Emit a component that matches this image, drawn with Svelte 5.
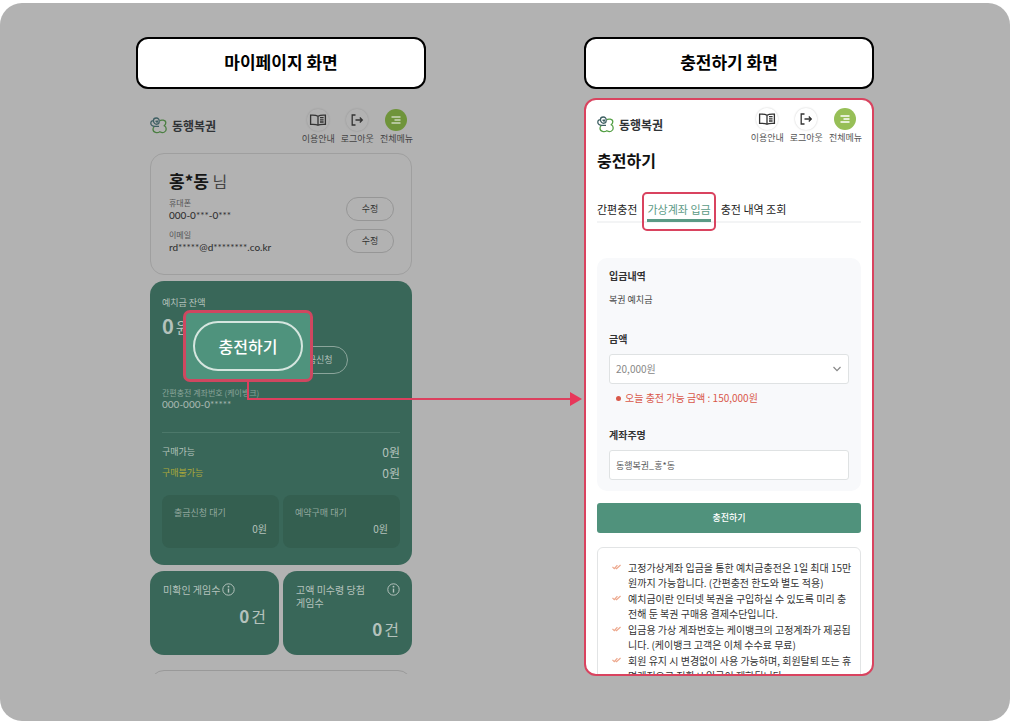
<script lang="ts">
  const menu = [
    { label: '이용안내', icon: 'book' },
    { label: '로그아웃', icon: 'logout' },
    { label: '전체메뉴', icon: 'menu' }
  ];

  const contacts = [
    { label: '휴대폰', value: '000-0***-0***' },
    { label: '이메일', value: 'rd*****@d********.co.kr' }
  ];

  const waiting = ['출금신청 대기', '예약구매 대기'];
  const tabs = ['간편충전', '가상계좌 입금', '충전 내역 조회'];

  const notices = [
    ['고정가상계좌 입금을 통한 예치금충전은 1일 최대 15만', '원까지 가능합니다. (간편충전 한도와 별도 적용)'],
    ['예치금이란 인터넷 복권을 구입하실 수 있도록 미리 충', '전해 둔 복권 구매용 결제수단입니다.'],
    ['입금용 가상 계좌번호는 케이뱅크의 고정계좌가 제공됩', '니다. (케이뱅크 고객은 이체 수수료 무료)'],
    ['회원 유지 시 변경없이 사용 가능하며, 회원탈퇴 또는 휴', '면계정으로 전환시 입금이 제한됩니다.']
  ];

  let activeTab = $state(1);
  let amount = $state('20,000원');
  let owner = $state('동행복권_홍*동');
</script>

{#snippet infoIcon()}
  <svg class="info" viewBox="0 0 13 13" aria-hidden="true">
    <circle cx="6.5" cy="6.5" r="5.7" fill="none" stroke="currentColor" />
    <path d="M6.5 5.6v4" stroke="currentColor" stroke-width="1.4" />
    <circle cx="6.5" cy="3.7" r="0.9" fill="currentColor" />
  </svg>
{/snippet}

{#snippet appHeader()}
  <header class="app-header">
    <a class="logo" href="#home">
      <svg viewBox="0 0 18 18" fill="none" stroke-width="1.3" aria-hidden="true">
        <path class="leaf" d="M9.800 3.600C11 2.800 15.800 2.600 15.800 5.800c0 1.400-.6 2.200-1.500 3 1.300.7 1.900 1.700 1.900 3.200 0 3.400-3.400 4.400-6.400 2.700-2.400 1.800-6.800 1-6.800-2.400 0-1.300.5-2 1.200-2.700" />
        <path class="stem" d="M9 9.300H4.800C2.600 9.300.8 8.200.8 6.200c0-1.600 1.200-2.600 2.600-2.500C3.500 2 4.700 1 6.200 1 8.200 1 9.300 2.400 9.200 4.400c0 1.500-.8 2.600-2.200 2.800-1.900.3-3.400-1.300-3.600-3.400M5.600 3.800l1.800 1.700M7.400 3.400v2" />
      </svg>
      <strong>동행복권</strong>
    </a>
    <nav>
      {#each menu as item}
        <a class="menu-item" href="#{item.icon}">
          <span class="circle {item.icon}">
            <svg viewBox="0 0 22 22" fill="none" stroke="currentColor" stroke-width="1.3" aria-hidden="true">
              {#if item.icon === 'book'}
                <path d="M11 7.200C9 6 6.500 6 3.600 6.200v9.200c3.200-.2 5.800-.2 7.400.9 1.600-1.100 4.200-1.100 7.400-.9V6.200C15.500 6 13 6 11 7.200zM11 7v9" />
                <path d="M13 8.600h3.600M13 10.800h3.600M13 13h3.600" />
              {:else if item.icon === 'logout'}
                <path d="M9.500 6H6.200v10h3.300M9.500 11h6.800M13.800 8.500l2.500 2.500-2.500 2.500" />
              {:else}
                <path d="M6.500 8h9M9.500 11h6M6.500 14h9" />
              {/if}
            </svg>
          </span>
          {item.label}
        </a>
      {/each}
    </nav>
  </header>
{/snippet}

<main class="board">
  <section class="column">
    <h2 class="caption">마이페이지 화면</h2>
    <div class="screen dimmed">
      {@render appHeader()}

      <div class="profile">
        <p class="name"><strong>홍*동</strong> 님</p>
        {#each contacts as contact}
          <div class="contact">
            <div>
              <span class="tiny">{contact.label}</span>
              <span class="value">{contact.value}</span>
            </div>
            <button type="button">수정</button>
          </div>
        {/each}
      </div>

      <div class="balance">
        <p class="label">예치금 잔액</p>
        <p class="total"><strong>0</strong>원</p>
        <div class="actions">
          <button type="button" class="withdraw">출금신청</button>
          <div class="spotlight">
            <button type="button">충전하기</button>
          </div>
        </div>
        <p class="tiny account">간편충전 계좌번호 (케이뱅크)</p>
        <p class="value">000-000-0*****</p>
        <hr />
        <div class="row"><span>구매가능</span><b>0원</b></div>
        <div class="row blocked"><span>구매불가능</span><b>0원</b></div>
        <div class="pair waiting">
          {#each waiting as label}
            <div class="wait">
              <p>{label}</p>
              <b>0원</b>
            </div>
          {/each}
        </div>
      </div>

      <div class="pair">
        <div class="count">
          <p class="inline">미확인 게임수 {@render infoIcon()}</p>
          <div class="amount"><strong>0</strong>건</div>
        </div>
        <div class="count">
          <p>고액 미수령 당첨<br />게임수 {@render infoIcon()}</p>
          <div class="amount"><strong>0</strong>건</div>
        </div>
      </div>

      <div class="next-card"></div>
    </div>
  </section>

  <svg class="connector" viewBox="0 0 336 26" aria-hidden="true">
    <path d="M1 0v19h325" fill="none" stroke="#dc405e" stroke-width="2" />
    <path d="M323 12l12 7-12 7z" fill="#e8375a" />
  </svg>

  <section class="column">
    <h2 class="caption">충전하기 화면</h2>
    <div class="screen active">
      {@render appHeader()}
      <h1>충전하기</h1>

      <div class="tabs">
        {#each tabs as tab, i}
          <button type="button" class:selected={i === activeTab} onclick={() => (activeTab = i)}>{tab}</button>
        {/each}
      </div>

      <form>
        <h3>입금내역</h3>
        <p class="kind">복권 예치금</p>
        <label for="amount">금액</label>
        <div class="select-wrap">
          <select id="amount" bind:value={amount}>
            <option>20,000원</option>
            <option>50,000원</option>
            <option>100,000원</option>
          </select>
          <svg viewBox="0 0 8 6" aria-hidden="true">
            <path d="M.5 1L4 4.700 7.500 1" fill="none" stroke="#888" stroke-width="1.2" />
          </svg>
        </div>
        <p class="limit">오늘 충전 가능 금액 : 150,000원</p>
        <label for="owner">계좌주명</label>
        <input id="owner" type="text" bind:value={owner} />
      </form>

      <button type="button" class="submit">충전하기</button>

      <ul class="notices">
        {#each notices as [first, second]}
          <li>
            <svg viewBox="0 0 10 6" aria-hidden="true">
              <path d="M.5 2.800L2.500 4.800 6 1M4 4l1 .8L9.500.8" fill="none" stroke="#eda78c" stroke-width="1.3" />
            </svg>
            <span>{first}<br />{second}</span>
          </li>
        {/each}
      </ul>
    </div>
  </section>
</main>

<style>
  :global(body) {
    background: #fff;
  }

  .board, .board * {
    box-sizing: border-box;
  }

  .board {
    position: relative;
    display: flex;
    justify-content: center;
    gap: 158px;
    margin: 3px 4px 4px 0;
    padding: 34px 20px 45px;
    background: #b2b2b2;
    border-radius: 22px;
    font-family: "Noto Sans CJK KR", sans-serif;
    font-size: 9px;
    line-height: 12px;
    color: #222;
  }

  .column {
    flex: 0 1 290px;
    min-width: 0;
  }

  h1, h2, h3, p, ul {
    margin: 0;
    padding: 0;
  }

  button, input, select {
    font: inherit;
    color: inherit;
  }

  button {
    padding: 0;
    background: none;
    white-space: nowrap;
    cursor: pointer;
  }

  a {
    color: inherit;
    text-decoration: none;
  }

  .caption {
    margin-bottom: 9px;
    padding: 11px 12px 13px;
    border: 2px solid #000;
    border-radius: 12px;
    background: #fff;
    color: #000;
    font-size: 17px;
    line-height: 24px;
    text-align: center;
  }

  .screen {
    height: 578px;
    padding: 0 11px;
    border: 2px solid transparent;
    border-radius: 12px;
    overflow: hidden;
  }

  .dimmed {
    padding: 1px 12px 0;
    border-radius: 0;
  }

  .active {
    background: #fff;
    border-color: #d9435f;
  }

  /* header */
  .app-header {
    display: flex;
    justify-content: space-between;
    align-items: flex-start;
    padding-top: 8px;
  }

  .logo {
    display: flex;
    align-items: center;
    gap: 4px;
    padding-top: 8px;
    color: #303336;
    font-size: 12px;
    line-height: 18px;
  }

  .logo svg {
    width: 18px;
    height: 18px;
  }

  .leaf {
    stroke: #55a046;
  }

  .stem {
    stroke: #3e5f63;
  }

  nav {
    display: flex;
    gap: 6px;
    margin-right: -1px;
  }

  .menu-item {
    display: flex;
    flex-direction: column;
    align-items: center;
    gap: 2px;
    color: #555;
    white-space: nowrap;
  }

  .circle {
    width: 22px;
    height: 22px;
    border-radius: 50%;
    box-shadow: 0 0 2px rgb(0 0 0 / 22%);
    color: #333;
  }

  .circle svg {
    display: block;
  }

  .circle.menu {
    background: #97bf57;
    box-shadow: none;
    color: #fff;
  }

  .dimmed .circle {
    box-shadow: 0 0 2px rgb(0 0 0 / 18%);
  }

  .dimmed .circle.menu {
    background: #6f943a;
    box-shadow: none;
    color: #ccd6bb;
  }

  .dimmed .menu-item {
    color: #444;
  }

  .dimmed .leaf {
    stroke: #4b7f42;
  }

  /* my page */
  .profile {
    margin-top: 8px;
    padding: 15px 17px 21px 18px;
    border: 1px solid #9f9f9f;
    border-radius: 14px;
  }

  .name {
    margin-bottom: 4px;
    font-size: 16px;
    line-height: 24px;
    color: #444;
  }

  .name strong {
    color: #161616;
    font-size: 17px;
  }

  .contact {
    display: flex;
    justify-content: space-between;
    align-items: center;
    margin-bottom: 8px;
  }

  .contact:last-child {
    margin-bottom: 0;
  }

  .contact span {
    display: block;
  }

  .contact button {
    width: 48px;
    height: 24px;
    border: 1px solid #969696;
    border-radius: 12px;
    color: #333;
  }

  .tiny {
    font-size: 8px;
    line-height: 12px;
    color: #555;
  }

  .value {
    font-family: Lato, "Liberation Sans", sans-serif;
    font-size: 10px;
    line-height: 12px;
    font-weight: 500;
    color: #333;
  }

  .balance {
    margin-top: 6px;
    padding: 16px 12px 17px;
    border-radius: 14px;
    background: #396759;
    color: #b4c2bc;
  }

  .total {
    margin-top: 3px;
    font-size: 16px;
    line-height: 28px;
  }

  .total strong, .amount strong {
    margin-right: 2px;
    font-size: 20px;
  }

  .actions {
    position: relative;
    display: flex;
    padding: 5px 0 0 122px;
  }

  .withdraw {
    width: 64px;
    height: 28px;
    border: 1px solid #8ba59b;
    border-radius: 14px;
  }

  .spotlight {
    position: absolute;
    left: 21px;
    bottom: -8px;
    padding: 8px 7px;
    border: 3px solid #cf4760;
    border-radius: 7px;
    background: #4f937d;
  }

  .spotlight button {
    display: block;
    width: 110px;
    height: 50px;
    border: 2px solid #d5e6df;
    border-radius: 25px;
    color: #fff;
    font-size: 16px;
    font-weight: 500;
  }

  .account {
    margin-top: 14px;
    color: #8aa59a;
    line-height: 10px;
  }

  .balance .value {
    color: #a3b5ae;
  }

  hr {
    margin: 22px 0 8px;
    border: 0;
    border-top: 1px solid #4c786a;
  }

  .row {
    display: flex;
    justify-content: space-between;
    align-items: center;
    height: 21px;
  }

  .row b {
    color: #b4c2bc;
    font-size: 12px;
    font-weight: 400;
  }

  .blocked {
    color: #aaa83a;
  }

  .pair {
    display: grid;
    grid-template-columns: 1fr 1fr;
    gap: 4px;
    margin-top: 6px;
  }

  .pair.waiting {
    margin-top: 12px;
  }

  .wait {
    padding: 12px 12px 13px;
    border-radius: 8px;
    background: #345f50;
    color: #93a89f;
  }

  .wait b {
    display: block;
    margin-top: 4px;
    color: #b4c2bc;
    font-size: 10px;
    font-weight: 400;
    text-align: right;
  }

  .count {
    position: relative;
    min-height: 84px;
    padding: 12px 13px;
    border-radius: 14px;
    background: #396759;
    color: #b4c2bc;
    font-size: 10px;
    line-height: 13px;
  }

  .info {
    position: absolute;
    top: 12px;
    right: 12px;
    width: 13px;
    height: 13px;
  }

  .inline {
    display: flex;
    gap: 2px;
  }

  .inline .info {
    position: static;
  }

  .amount {
    margin-top: 8px;
    font-size: 16px;
    line-height: 24px;
    text-align: right;
  }

  .amount strong {
    font-size: 17px;
  }

  .next-card {
    height: 60px;
    margin-top: 15px;
    border: 1px solid #999;
    border-radius: 14px;
  }

  .connector {
    position: absolute;
    top: 377px;
    left: calc(50% - 258px);
    width: 336px;
    height: 26px;
  }

  /* charge page */
  h1 {
    margin-top: 4px;
    color: #111;
    font-size: 16px;
    line-height: 24px;
  }

  .tabs {
    display: flex;
    gap: 10px;
    margin-top: 28px;
    border-bottom: 2px solid #f3f4f5;
    font-size: 11px;
    line-height: 19px;
  }

  .tabs button {
    position: relative;
    margin-bottom: -1px;
    border: 0;
    border-bottom: 3px solid transparent;
  }

  .tabs .selected {
    border-color: #5b9a85;
    color: #5b9a85;
  }

  .tabs .selected::after {
    content: "";
    position: absolute;
    inset: -8px -5px -12px;
    border: 2px solid #d9435f;
    border-radius: 5px;
  }

  form {
    margin-top: 35px;
    padding: 12px 12px 11px;
    border-radius: 10px;
    background: #f8f9fb;
  }

  h3, label {
    display: block;
    color: #333;
    font-size: 10px;
    line-height: 12px;
    font-weight: 700;
  }

  .kind {
    margin: 12px 0 27px;
    color: #444;
  }

  .select-wrap {
    position: relative;
  }

  .select-wrap svg {
    position: absolute;
    top: 12px;
    right: 8px;
    width: 8px;
    height: 6px;
  }

  select, input {
    width: 100%;
    height: 30px;
    margin-top: 9px;
    padding: 0 6px;
    border: 1px solid #dfe2e3;
    border-radius: 3px;
    background: #fff;
    color: #555;
    appearance: none;
  }

  select {
    display: block;
    color: #888;
    font-size: 10px;
  }

  .limit {
    display: flex;
    align-items: center;
    gap: 4px;
    margin: 8px 0 25px 7px;
    color: #d9584a;
    font-size: 10px;
  }

  .limit::before {
    content: "";
    width: 5px;
    height: 5px;
    border-radius: 50%;
    background: #d9584a;
  }

  .submit {
    width: 100%;
    height: 30px;
    margin-top: 12px;
    border: 0;
    border-radius: 3px;
    background: #50927c;
    color: #fff;
    font-weight: 500;
  }

  .notices {
    margin-top: 14px;
    padding: 12px 8px 12px 14px;
    border: 1px solid #e2e4e5;
    border-radius: 6px;
    list-style: none;
    font-size: 10px;
    line-height: 15px;
    color: #333;
  }

  .notices li {
    display: flex;
    gap: 7px;
    margin-bottom: 1px;
    white-space: nowrap;
  }

  .notices svg {
    flex: none;
    width: 9px;
    height: 6px;
    margin-top: 4px;
  }
</style>
